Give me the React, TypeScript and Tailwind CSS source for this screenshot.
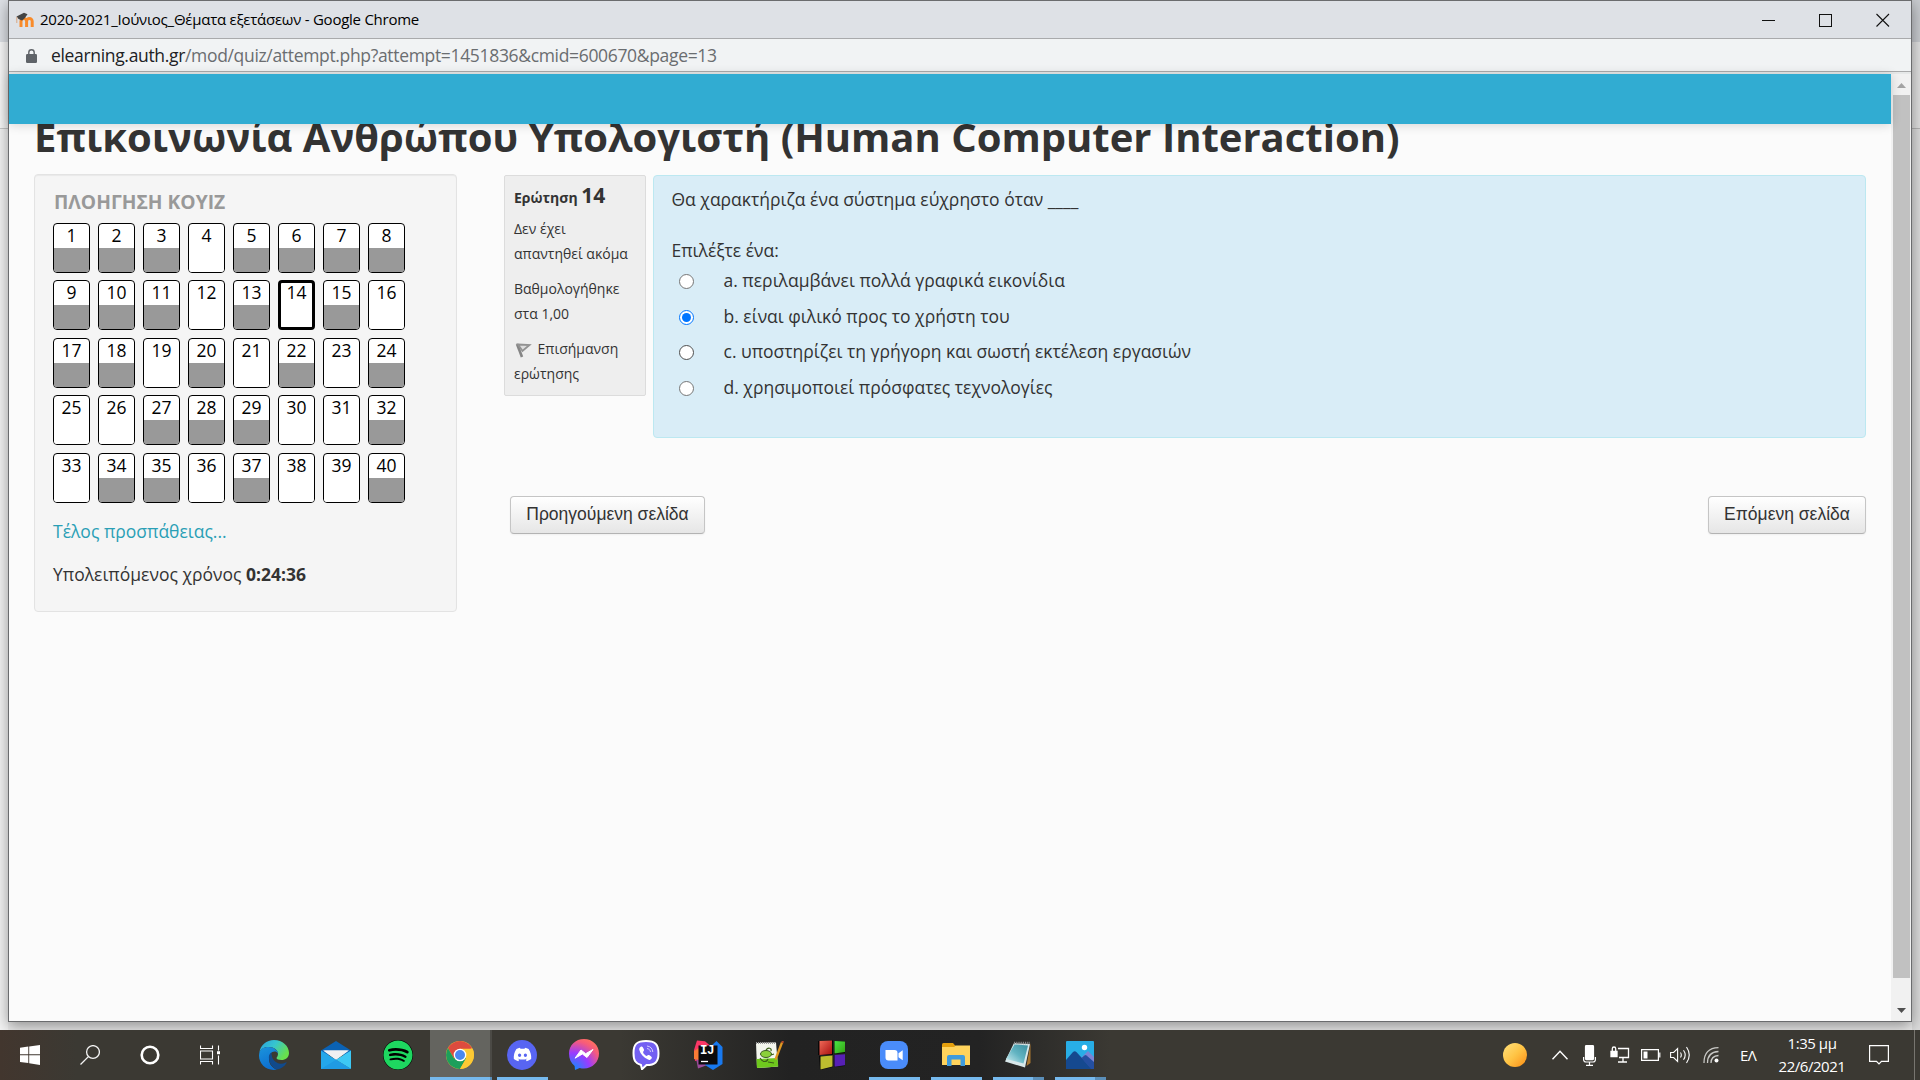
import React from "react";
import { FaSpotify, FaDiscord } from "react-icons/fa6";

const ANSWERED = new Set([1, 2, 3, 5, 6, 7, 8, 9, 10, 11, 13, 15, 17, 18, 20, 22, 24, 27, 28, 29, 32, 34, 35, 37, 40]);
const CURRENT = 14;
const ROWS = [0, 1, 2, 3, 4];
const COLS = [1, 2, 3, 4, 5, 6, 7, 8];

function QuizButton({ n }: { n: number }) {
  const current = n === CURRENT;
  return (
    <a
      className={`flex h-[50px] w-[37px] flex-col overflow-hidden rounded-[4px] border-black bg-white text-center text-[17.5px] text-black ${
        current ? "border-[3px]" : "border"
      }`}
    >
      <span className={current ? "h-[22px] shrink-0 leading-[19px]" : "h-[24px] shrink-0 leading-[23px]"}>{n}</span>
      <span className={ANSWERED.has(n) ? "flex-1 bg-[#999]" : "flex-1 bg-white"} />
    </a>
  );
}

function TitleBar() {
  return (
    <div className="flex h-[38px] shrink-0 items-center border-b border-[#a9aaac] bg-[#dee1e6]">
      <svg className="ml-[6px] h-[16px] w-[20px]" viewBox="0 0 20 16">
        <path d="M6 15V9.200a2.700 2.700 0 0 1 5.600 0V15M11.600 15V9.200a2.700 2.700 0 0 1 5.600 0V15" fill="none" stroke="#f98b2a" strokeWidth="3" />
        <path d="M1.500 4.500 9 .8l3.500 1.400L9.500 6.500 7 8.500 3.500 7z" fill="#444" />
        <path d="M1.800 5v6" stroke="#d9a783" strokeWidth="1" />
      </svg>
      <span className="ml-[5px] whitespace-nowrap text-[15px] tracking-[-0.25px] text-black">
        2020-2021_Ιούνιος_Θέματα εξετάσεων - Google Chrome
      </span>
      <svg className="ml-auto mr-[21px] h-[14px] w-[128px]" viewBox="0 0 128 14" fill="none" stroke="#111">
        <path d="M0 7.5h13" shapeRendering="crispEdges" />
        <path d="M57.500 1.500h12v12h-12z" shapeRendering="crispEdges" strokeWidth="1" />
        <path d="M114.500 1 127 13.500M127 1 114.500 13.500" strokeWidth="1.100" />
      </svg>
    </div>
  );
}

function AddressBar() {
  return (
    <div className="flex h-[33px] shrink-0 items-center border-b border-[#a9aaab] bg-[#f1f3f4]">
      <svg className="ml-[17px] mt-[1px] h-[14px] w-[11px]" viewBox="0 0 11 14">
        <rect y="5" width="11" height="9" rx="1.200" fill="#5f6368" />
        <path d="M2.800 6V3.500a2.700 2.700 0 0 1 5.400 0V6" fill="none" stroke="#5f6368" strokeWidth="1.400" />
      </svg>
      <span className="ml-[14px] mt-[1px] whitespace-nowrap text-[17.5px] tracking-[-0.33px] text-[#6a6d70]">
        <span className="text-[#202124]">elearning.auth.gr</span>/mod/quiz/attempt.php?attempt=1451836&amp;cmid=600670&amp;page=13
      </span>
    </div>
  );
}

function NavigationPanel() {
  return (
    <aside className="ml-[25px] mt-[5px] h-[438px] w-[423px] rounded-[4px] border border-[#e3e3e3] bg-[#f5f5f5] pl-[18px] shadow-[inset_0_1px_1px_rgba(0,0,0,0.05)]">
      <h2 className="mt-[14px] pl-[1px] text-[19.25px] font-bold leading-[25px] text-[#999]">ΠΛΟΗΓΗΣΗ ΚΟΥΙΖ</h2>
      <div className="mt-[9px] flex flex-col gap-[7.4px]">
        {ROWS.map((r) => (
          <div key={r} className="flex gap-2">
            {COLS.map((c) => (
              <QuizButton key={c} n={r * 8 + c} />
            ))}
          </div>
        ))}
      </div>
      <a className="mt-[16.4px] block text-[17.5px] leading-[25px] text-[#2a9fb5]">Τέλος προσπάθειας...</a>
      <div className="mt-[18px] text-[17.5px] leading-[25px] text-[#333]">
        Υπολειπόμενος χρόνος <b>0:24:36</b>
      </div>
    </aside>
  );
}

function QuestionInfo() {
  return (
    <div className="h-[221px] w-[142px] rounded-[2px] border border-[#dcdcdc] bg-[#eee] pl-[9px] text-[14px] leading-[25px] text-[#333]">
      <h3 className="mt-[7px] whitespace-nowrap text-[14px] font-bold">
        Ερώτηση <span className="text-[21px]">14</span>
      </h3>
      <div className="mt-[6px] whitespace-nowrap">Δεν έχει<br />απαντηθεί ακόμα</div>
      <div className="mt-[10px]">Βαθμολογήθηκε<br />στα 1,00</div>
      <div className="mt-[10px] whitespace-nowrap">
        <svg className="mr-[5.5px] inline-block h-[16px] w-[18px]" viewBox="0 0 18 16">
          <path d="m3 2 5 13" stroke="#858585" strokeWidth="2.600" />
          <path d="M4 2.500 15.500 3 8.500 9z" fill="#ddd" stroke="#929292" strokeWidth="1.800" />
        </svg>
        Επισήμανση<br />ερώτησης
      </div>
    </div>
  );
}

const ANSWERS = [
  "a. περιλαμβάνει πολλά γραφικά εικονίδια",
  "b. είναι φιλικό προς το χρήστη του",
  "c. υποστηρίζει τη γρήγορη και σωστή εκτέλεση εργασιών",
  "d. χρησιμοποιεί πρόσφατες τεχνολογίες",
];

function Radio({ index }: { index: number }) {
  if (index === 1) {
    return (
      <span className="flex h-[15px] w-[15px] items-center justify-center rounded-full border-[1.5px] border-[#0075ff] bg-white">
        <span className="h-[9px] w-[9px] rounded-full bg-[#0075ff]" />
      </span>
    );
  }
  return (
    <span
      className={`h-[15px] w-[15px] rounded-full border-[1.2px] bg-white ${index === 2 ? "border-[#4f4f4f]" : "border-[#767676]"}`}
    />
  );
}

function Question() {
  return (
    <div className="ml-[7px] h-[263px] w-[1213px] rounded-[4px] border border-[#bce8f1] bg-[#d9edf7] pl-[17.5px] text-[17.5px] leading-[25px] text-[#333]">
      <p className="mt-[11px]">Θα χαρακτήριζα ένα σύστημα εύχρηστο όταν ____</p>
      <p className="mt-[26px]">Επιλέξτε ένα:</p>
      <div className="mt-[5px] flex flex-col gap-[10.7px]">
        {ANSWERS.map((a, i) => (
          <label key={a} className="flex h-[25px] items-center pl-[7.5px]">
            <span className="mt-[2px]"><span className="flex"><Radio index={i} /></span></span>
            <span className="ml-[29.500px]">{a}</span>
          </label>
        ))}
      </div>
    </div>
  );
}

function PageButton({ children, className }: { children: React.ReactNode; className: string }) {
  return (
    <button
      className={`h-[38px] whitespace-nowrap rounded-[4px] border border-[#c5c5c5] border-b-[#b3b3b3] bg-linear-to-b from-white to-[#e6e6e6] pb-[2px] font-['Liberation_Sans',sans-serif] text-[17.5px] leading-[25px] text-[#333] shadow-[0_1px_2px_rgba(0,0,0,0.05)] ${className}`}
    >
      {children}
    </button>
  );
}

function Scrollbar() {
  return (
    <div className="flex w-[20px] shrink-0 flex-col items-center bg-[#f1f1f1]">
      <svg className="mt-[9px] h-[5px] w-[9px]" viewBox="0 0 9 5"><path d="M0 5 4.500 0 9 5z" fill="#a3a3a3" /></svg>
      <div className="mt-[7px] h-[883px] w-[17px] bg-[#c1c1c1]" />
      <svg className="mt-[30px] h-[5px] w-[9px]" viewBox="0 0 9 5"><path d="M0 0 4.500 5 9 0z" fill="#505050" /></svg>
    </div>
  );
}

function ChromeWindow() {
  return (
    <div className="z-10 flex h-[1022px] w-[1904px] shrink-0 flex-col border border-[#6b6c6e] bg-[#fbfbfb] shadow-[0_4px_14px_rgba(0,0,0,0.4)]">
      <TitleBar />
      <AddressBar />
      <div className="h-[2px] shrink-0 bg-[#e6e8e8]" />
      <div className="flex min-h-0 flex-1">
        <div className="flex min-w-0 flex-1 flex-col">
          <div className="z-10 h-[50px] shrink-0 bg-[#31acd2] shadow-[0_1px_10px_rgba(0,0,0,0.16)]" />
          <main className="min-h-0 flex-1">
            <h1 className="-mt-[15px] ml-[25px] h-[60px] whitespace-nowrap text-[40px] font-bold leading-[56px] text-[#333]">
              Επικοινωνία Ανθρώπου Υπολογιστή (Human Computer Interaction)
            </h1>
            <div className="flex">
              <NavigationPanel />
              <div className="ml-[47px] mt-[6px]">
                <div className="flex items-start">
                  <QuestionInfo />
                  <Question />
                </div>
                <div className="mt-[58px] flex justify-between pl-[6px]">
                  <PageButton className="w-[195px]">Προηγούμενη σελίδα</PageButton>
                  <PageButton className="w-[158px]">Επόμενη σελίδα</PageButton>
                </div>
              </div>
            </div>
          </main>
        </div>
        <Scrollbar />
      </div>
    </div>
  );
}

const WindowsLogo = () => (
  <svg className="h-[20px] w-[20px]" viewBox="0 0 20 20" fill="#fff">
    <path d="M0 2.800 8.300 1.600v7.700H0zM9.200 1.500 20 0v9.300H9.200zM0 10.300h8.300V18L0 16.900zM9.200 10.300H20V20L9.200 18.300z" />
  </svg>
);

const SearchGlyph = () => (
  <svg className="h-[20px] w-[20px]" viewBox="0 0 20 20" fill="none" stroke="#f4f4f4" strokeWidth="1.300">
    <circle cx="13" cy="7" r="6.400" />
    <path d="M8.400 11.600.5 19.500" />
  </svg>
);

const CortanaGlyph = () => (
  <svg className="h-[20px] w-[20px]" viewBox="0 0 20 20" fill="none">
    <circle cx="10" cy="10" r="8.300" stroke="#fff" strokeWidth="2.600" />
  </svg>
);

const TaskViewGlyph = () => (
  <svg className="h-[20px] w-[20px]" viewBox="0 0 20 20" fill="none" stroke="#fff">
    <path d="M.5.5v3h12v-3M.5 19.500v-3h12v3M.5 6h12v8H.5zM18.500.5v5M18.500 10.500v9" strokeWidth="1.100" />
    <path d="M17 6.200h3v3h-3z" fill="#fff" stroke="none" />
  </svg>
);

const EdgeIcon = () => (
  <svg className="h-[30px] w-[30px]" viewBox="0 0 30 30">
    <defs>
      <linearGradient id="edgeTop" x1="0" y1="0" x2="1" y2=".5">
        <stop offset="0" stopColor="#2a9fdf" /><stop offset=".5" stopColor="#36c5cf" /><stop offset="1" stopColor="#68e04c" />
      </linearGradient>
      <linearGradient id="edgeLow" x1="0" y1="0" x2=".4" y2="1">
        <stop offset="0" stopColor="#1b94dc" /><stop offset="1" stopColor="#0d6fd0" />
      </linearGradient>
    </defs>
    <path d="M.5 12C1.500 5 7.500 0 15 0c8.500 0 15 6 15 13 0 4.500-3.500 7-7.500 7-3 0-5-1-5-2 0-.8 1.500-1.500 1.500-4C19 10 15 7 10 7 5 7 2 9 .5 12z" fill="url(#edgeTop)" />
    <path d="M.3 13C1 9 5 7 9.500 7c5.500 0 9.500 3.500 9.500 6.500-1-1.500-2-2-3.500-2-3 0-5.500 3-5.500 7.500C10 24 13 28 18 29.600 8 31.500 0 24.500 0 15.500z" fill="url(#edgeLow)" />
    <path d="M12.500 12.300C10 14 9.600 16.500 10 19c.6 5 4 9 8 10.600 4-.8 7.500-3 9.500-6.500.4-.8-.2-1-.8-.7-7 3.600-14.500-1-14.200-10.100z" fill="#114a8b" />
  </svg>
);

const MailIcon = () => (
  <svg className="h-[28px] w-[30px]" viewBox="0 0 30 28">
    <path d="M0 9.500 15 0l15 9.500V14H0z" fill="#0b62b4" />
    <path d="M2 9.500h26L15 19z" fill="#f0f0f2" />
    <path d="M0 9.500 30 28H0z" fill="#24a7ea" />
    <path d="M30 9.500 15 18.700 30 28z" fill="#3dc8f4" />
    <path d="M3 9.500h24L15 18.200z" fill="#f0f0f2" />
    <path d="M15 18.700 30 28H0z" fill="#1f9be4" />
  </svg>
);

const ChromeIcon = () => (
  <svg className="h-[28px] w-[28px]" viewBox="0 0 28 28">
    <circle cx="14" cy="14" r="14" fill="#fbbf2d" />
    <path d="M14 14 8 17.500 1.900 7A14 14 0 0 1 26.100 7z" fill="#dd4b3e" />
    <path d="M14 14 20.100 17.500 14 28A14 14 0 0 1 1.900 7L8 17.500z" fill="#1d9f5b" />
    <path d="M14 7.700h12.500A14 14 0 0 1 14 28l6-10.500z" fill="#fcc934" />
    <circle cx="14" cy="14" r="6.300" fill="#fff" />
    <circle cx="14" cy="14" r="5" fill="#4a88f0" />
  </svg>
);

const MessengerIcon = () => (
  <svg className="h-[31px] w-[30px]" viewBox="0 0 30 31">
    <defs>
      <radialGradient id="msgr" cx=".15" cy="1" r="1.100">
        <stop offset="0" stopColor="#0a90ff" /><stop offset=".5" stopColor="#9a3bff" /><stop offset=".85" stopColor="#f65b7c" /><stop offset="1" stopColor="#ff6d63" />
      </radialGradient>
    </defs>
    <path d="M15 0c8.500 0 15 6.200 15 14.500S23.500 29.500 15 29.500c-1.600 0-3-.2-4.300-.6L6 31l-.4-4C2 24 0 20 0 14.500 0 6.200 6.500 0 15 0z" fill="url(#msgr)" />
    <path d="m6 19.200 6-8.200 4.700 3.700L24 10.500l-6 8-4.600-3.500z" fill="#fff" stroke="#fff" strokeLinejoin="round" />
  </svg>
);

const ViberIcon = () => (
  <svg className="h-[30px] w-[28px]" viewBox="0 0 28 30">
    <path d="M14 1c9 0 12.500 3 12.500 12.500C26.500 22 23 25 14.500 25L10 29.200 9 25C3.500 23.500 1.500 20.500 1.500 13 1.500 4 5 1 14 1z" fill="#7360f2" stroke="#fff" strokeWidth="2" />
    <path d="M8.500 7c1.500-1 2.200 0 3 1.500s.8 2-.2 3 1.500 4 3.500 4.500c1-1 1.500-1.600 3-.6s2.700 1.800 1.800 3-1.900 2-3.600 1.200C11.500 17.500 8.500 14 7.300 10c-.3-1.300.2-2.300 1.200-3z" fill="#fff" />
    <path d="M15 6c3.600.4 5.500 2.600 5.800 6M15 8.500c2 .4 3.200 1.500 3.500 3.500" fill="none" stroke="#d5cffc" strokeWidth="1" />
  </svg>
);

const IntelliJIcon = () => (
  <span className="relative flex h-[30px] w-[30px] items-center justify-center">
    <svg className="absolute inset-0 h-[30px] w-[30px]" viewBox="0 0 30 30">
      <path d="m1 10 3-9.500 8 .8 7 6L9 20 2 21z" fill="#fb3766" />
      <path d="m3 18 2 10.500L17 24l-4-9z" fill="#9c4c9b" />
      <path d="M1 11 6 8v12l-5-1z" fill="#f97b35" />
      <path d="m17 7 6.500-6L29.500 7v17l-9.500 6-8-5z" fill="#1879ef" />
      <path d="M5.500 5.500h19v19h-19z" fill="#0b0b0d" />
      <path d="M8 21.500h7" stroke="#fff" strokeWidth="1.300" />
    </svg>
    <span className="relative mb-[7px] mr-[2px] font-['Liberation_Mono',monospace] text-[12.5px] font-bold leading-none tracking-[-0.5px] text-white">IJ</span>
  </span>
);

const NotepadPlusIcon = () => (
  <svg className="h-[28px] w-[28px]" viewBox="0 0 28 28">
    <path d="m0 2 20-.5 2 24L1 27z" fill="#f4f6ee" />
    <path d="m.5 18 21-1 .8 8.500L1 27z" fill="#6ec81d" />
    <path d="M0 2h19" stroke="#999" strokeWidth="2" strokeDasharray="1 1" />
    <ellipse cx="10" cy="13" rx="5.500" ry="3.500" fill="#8bd03a" stroke="#3d5a25" strokeWidth="1" />
    <path d="M10 9c2-3 6-2 5 1M4 17c3 5 7 4 8 1M15 14l3-1M12 21l6 1" fill="none" stroke="#3c5f1a" strokeWidth="1.200" />
    <path d="m26 1.500-6.500 17" stroke="#e09720" strokeWidth="2.300" />
    <path d="m27 0-.8 2" stroke="#b3492b" strokeWidth="2.300" />
  </svg>
);

const BlocksIcon = () => (
  <svg className="h-[30px] w-[28px]" viewBox="0 0 28 30">
    <defs>
      <linearGradient id="blkRed" x1="0" y1="0" x2="1" y2="1"><stop stopColor="#f06a58" /><stop offset="1" stopColor="#a80f0f" /></linearGradient>
      <linearGradient id="blkGreen" x1="0" y1="0" x2="1" y2="1"><stop stopColor="#49e546" /><stop offset="1" stopColor="#36a312" /></linearGradient>
    </defs>
    <path d="M0 1 15 .5V15H0zM16 1l11 0v12l-11 1zM1 16h14v11L2 30zM16 15h11v11l-11 1z" fill="#080808" />
    <path d="M1.500 1 14 .5V14L1.500 15z" fill="url(#blkRed)" />
    <path d="m16.500 1 10.500.5V12l-10.500 1.500z" fill="url(#blkGreen)" />
    <path d="m2.500 16.500 12-1v11l-12 3z" fill="#bdbd2f" />
    <path d="m16.500 15 10.500-.8v11l-10.500 1.500z" fill="#5720b5" />
  </svg>
);

const ZoomIcon = () => (
  <svg className="h-[28px] w-[28px]" viewBox="0 0 28 28">
    <rect width="28" height="28" rx="8" fill="#4a8cfa" />
    <path d="M5.500 9h9a3 3 0 0 1 3 3v7.500h-9a3 3 0 0 1-3-3zM18.500 12.300l4.200-3v10l-4.200-3z" fill="#fff" />
  </svg>
);

const ExplorerIcon = () => (
  <svg className="h-[24px] w-[28px]" viewBox="0 0 28 24">
    <path d="M0 1.500Q0 0 1.500 0H11l2.500 3-2 2H0z" fill="#e5a00d" />
    <path d="M0 4h12l1.500-1.500H28V22H0z" fill="#ffd35c" />
    <path d="M5 23V14q0-2 2-2h14q2 0 2 2v9h-4.500v-6.500h-9V23z" fill="#3f9bdc" />
  </svg>
);

const NotepadIcon = () => (
  <svg className="h-[28px] w-[28px]" viewBox="0 0 28 28">
    <defs>
      <linearGradient id="padFace" x1="0" y1="1" x2="1" y2="0"><stop stopColor="#d5f0f3" /><stop offset=".5" stopColor="#62b4c2" /><stop offset="1" stopColor="#3b8e9f" /></linearGradient>
    </defs>
    <path d="M26.500 2v20l-4 3z" fill="#a87731" />
    <path d="m10 2 16 1-5 23.500-20-6z" fill="#d9e8ea" />
    <path d="M10.500 3.500 24 4.500l-4.500 18L2 18z" fill="url(#padFace)" />
    <path d="M10 2h16" stroke="#888" strokeWidth="2.500" strokeDasharray="1.200 1" />
  </svg>
);

const PhotosIcon = () => (
  <svg className="h-[28px] w-[28px]" viewBox="0 0 28 28">
    <rect width="28" height="28" rx="1" fill="#28aee6" />
    <path d="m14 18 8-8 6 6v12H14z" fill="#7b84d3" />
    <path d="M0 19 7 11q1.700-1.500 3.400 0L26 28H0z" fill="#15498f" />
    <path d="m15.500 17 3-2.500q1-.8 2 0L28 21v7h-3z" fill="#244fa0" />
    <circle cx="18.500" cy="6.500" r="2.700" fill="#fff" />
  </svg>
);

type Task = { icon: React.ReactNode; run?: "one" | "many" };
const LAUNCHERS: Task[] = [
  { icon: <EdgeIcon /> },
  { icon: <MailIcon /> },
  { icon: <FaSpotify className="h-[30px] w-[30px] rounded-full bg-black text-[#1ed760]" /> },
  { icon: <ChromeIcon />, run: "many" },
  {
    icon: (
      <span className="flex h-[30px] w-[30px] items-center justify-center rounded-full bg-[#5865f2]">
        <FaDiscord className="h-[19px] w-[19px] text-white" />
      </span>
    ),
    run: "one",
  },
  { icon: <MessengerIcon /> },
  { icon: <ViberIcon /> },
  { icon: <IntelliJIcon /> },
  { icon: <NotepadPlusIcon /> },
  { icon: <BlocksIcon /> },
  { icon: <ZoomIcon />, run: "one" },
  { icon: <ExplorerIcon />, run: "one" },
  { icon: <NotepadIcon />, run: "many" },
  { icon: <PhotosIcon />, run: "many" },
];

function TaskItem({ task, active }: { task: Task; active: boolean }) {
  return (
    <div className="flex h-[50px] w-[62px] shrink-0">
      <div className={`flex w-[60px] flex-col items-center ${active ? "bg-[#64645f]" : ""}`}>
        <div className="flex h-[47px] w-full items-center justify-center pt-[2px]">{task.icon}</div>
        {task.run && (
          <div className={`flex h-[3px] ${active ? "w-full" : "w-[51px]"}`}>
            <span className="flex-1 bg-[#76b9ed]" />
            {task.run === "many" && !active && <span className="w-[11px] bg-[#5b8fb9]" />}
          </div>
        )}
      </div>
      {active && (
        <div className="flex w-[2px] flex-col bg-[#4b4a45]">
          <span className="mt-auto h-[3px] bg-[#5b8fb9]" />
        </div>
      )}
    </div>
  );
}

function Taskbar() {
  return (
    <div className="flex h-[50px] w-full shrink-0 items-center bg-linear-to-r from-[#42362e] from-0% via-[#3b3933] via-4% to-[#3b3933] text-white">
      <div className="flex h-full w-full items-center bg-[linear-gradient(90deg,transparent_0,transparent_620px,#222_790px,#232323_980px,transparent_1110px,transparent_100%)]">
        <div className="flex w-[244px] shrink-0 items-center gap-[40px] pl-[20px]">
          <WindowsLogo />
          <SearchGlyph />
          <CortanaGlyph />
          <TaskViewGlyph />
        </div>
        {LAUNCHERS.map((t, i) => (
          <TaskItem key={i} task={t} active={i === 3} />
        ))}
        <div className="ml-auto flex h-full items-center">
          <span className="h-[24px] w-[24px] rounded-full bg-linear-to-br from-[#ffe17a] via-[#ffc444] to-[#f98a05]" />
          <svg className="ml-[25px] h-[10px] w-[16px]" viewBox="0 0 16 10" fill="none" stroke="#fff" strokeWidth="1.400">
            <path d="m.5 9.200 7.500-8 7.500 8" />
          </svg>
          <svg className="ml-[15px] h-[21px] w-[13px]" viewBox="0 0 13 21" fill="none" stroke="#fff" strokeWidth="1.200">
            <rect x="2.500" y=".6" width="8" height="14" rx=".8" fill="#fff" />
            <path d="M.6 12v2.500q0 2.500 2.500 2.500h6.800q2.500 0 2.500-2.500V12M6.500 17v3M3 20.300h7" />
          </svg>
          <svg className="ml-[14px] h-[18px] w-[20px]" viewBox="0 0 20 18" fill="none" stroke="#fff" strokeWidth="1.300">
            <path d="M8 2.500h10.500v9H9M13 11.500v4M8 16h9" />
            <path d="M1 5.500h6v5H1z" fill="#fff" />
            <path d="M2.300 5V2.700a1.700 1.700 0 0 1 3.400 0V5" />
          </svg>
          <svg className="ml-[11px] h-[12px] w-[20px]" viewBox="0 0 20 12" fill="none" stroke="#fff" strokeWidth="1.200">
            <path d="M.6.6h16.800v10.800H.6z" />
            <path d="M2.500 2.500h4v7h-4z" fill="#fff" stroke="none" />
            <path d="M18.800 3.500v5" />
          </svg>
          <svg className="ml-[9px] h-[18px] w-[21px]" viewBox="0 0 21 18" fill="none" stroke="#fff" strokeWidth="1.100">
            <path d="M.6 6.500h3l4-4v13l-4-4h-3z" />
            <path d="M10.500 6.500q1.600 2.500 0 5M13.500 4.200q3.400 4.800 0 9.600M16.500 1q5.500 8 0 16" />
          </svg>
          <svg className="ml-[12px] h-[16px] w-[17px]" viewBox="0 0 17 16" fill="none" stroke="#c9c9c6" strokeWidth="1.300">
            <path d="M1 16Q1 1 15.500.7M4.500 16Q4.500 5 15.500 4.500M8 16q0-7 7.500-7.500" />
            <circle cx="13.500" cy="13.500" r="2" fill="#fff" stroke="none" />
          </svg>
          <span className="ml-[20px] w-[17px] whitespace-nowrap text-[15px] tracking-[-0.7px]">ΕΛ</span>
          <div className="ml-[19px] w-[72px] whitespace-nowrap text-center text-[15px] leading-[23px] tracking-[-0.45px]">
            <div>1:35 μμ</div>
            <div>22/6/2021</div>
          </div>
          <svg className="ml-[21px] h-[20px] w-[20px]" viewBox="0 0 20 20" fill="none" stroke="#fff" strokeWidth="1.200">
            <path d="M.6.6h18.800v15.800H12.500L10 19l-2.500-2.600H.6z" />
          </svg>
          <span className="ml-[25px] mr-[5px] h-full w-px bg-[#77756f]" />
        </div>
      </div>
    </div>
  );
}

function SideStrip({ className }: { className: string }) {
  return (
    <div className={`flex w-[8px] shrink-0 flex-col ${className}`}>
      <div className="h-[42px] bg-[#dee1e6]" />
      <div className="h-[86px] bg-[#fafafa]" />
      <div className="h-px bg-[#c8c8c8]" />
      <div className="flex-1 bg-[#f4f4f4]" />
    </div>
  );
}

export default function App() {
  return (
    <div className="flex h-[1080px] w-[1920px] flex-col overflow-hidden bg-[#ececec] font-['Open_Sans','Noto_Sans',sans-serif]">
      <div className="flex h-[1030px] shrink-0 overflow-hidden">
        <SideStrip className="" />
        <ChromeWindow />
        <SideStrip className="brightness-90" />
      </div>
      <Taskbar />
    </div>
  );
}
